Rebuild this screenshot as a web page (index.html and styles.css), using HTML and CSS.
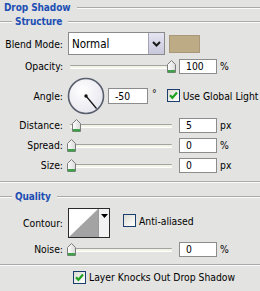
FILE: index.html
```html
<!DOCTYPE html>
<html>
<head>
<meta charset="utf-8">
<link rel="stylesheet" href="styles.css">
</head>
<body>
<div class="panel">
  <div class="title"><span class="title-text">Drop Shadow</span><i class="rule"></i></div>

  <section class="group structure">
    <div class="legend"><i class="rule lead"></i><span class="legend-text">Structure</span><i class="rule"></i></div>

    <div class="row row-blend">
      <span class="lbl">Blend Mode:</span>
      <div class="select">
        <span class="select-val">Normal</span>
        <span class="select-btn">
          <svg width="9" height="6" viewBox="0 0 9 6"><path d="M1 1 L4.5 4.5 L8 1" fill="none" stroke="#1a1a1a" stroke-width="2"/></svg>
        </span>
      </div>
      <div class="swatch"></div>
    </div>

    <div class="row row-opacity">
      <span class="lbl">Opacity:</span>
      <div class="slider"><span class="thumb" style="left:100px"></span></div>
      <div class="num">100</div><span class="unit">%</span>
    </div>

    <div class="row row-angle">
      <span class="lbl">Angle:</span>
      <svg class="dial" width="38" height="38" viewBox="0 0 38 38">
        <defs>
          <radialGradient id="dg" cx="0.4" cy="0.35" r="0.7">
            <stop offset="0" stop-color="#ffffff"/>
            <stop offset="1" stop-color="#e6e6ee"/>
          </radialGradient>
        </defs>
        <circle cx="19" cy="19" r="17.5" fill="url(#dg)" stroke="#5a5f6e" stroke-width="1.6"/>
        <line x1="19" y1="19" x2="29.5" y2="31.5" stroke="#111" stroke-width="1.2"/>
        <circle cx="19" cy="19" r="1.7" fill="#111"/>
      </svg>
      <div class="num num-angle">-50</div><span class="deg">°</span>
      <span class="check on"></span><span class="check-text">Use Global Light</span>
    </div>

    <div class="row row-dist">
      <span class="lbl">Distance:</span>
      <div class="slider"><span class="thumb" style="left:5px"></span></div>
      <div class="num">5</div><span class="unit">px</span>
    </div>

    <div class="row row-spread">
      <span class="lbl">Spread:</span>
      <div class="slider"><span class="thumb" style="left:0px"></span></div>
      <div class="num">0</div><span class="unit">%</span>
    </div>

    <div class="row row-size">
      <span class="lbl">Size:</span>
      <div class="slider"><span class="thumb" style="left:0px"></span></div>
      <div class="num">0</div><span class="unit">px</span>
    </div>
  </section>

  <section class="group quality">
    <div class="legend"><i class="rule lead"></i><span class="legend-text">Quality</span><i class="rule"></i></div>

    <div class="row row-contour">
      <span class="lbl">Contour:</span>
      <div class="contour">
        <svg class="curve" width="29" height="28" viewBox="0 0 29 28"><rect width="29" height="28" fill="#fff"/><path d="M29 0 L29 28 L0 28 Z" fill="#a3a3a3"/></svg>
        <span class="contour-btn"><svg width="7" height="4" viewBox="0 0 7 4"><path d="M0 0 H7 L3.5 4 Z" fill="#000"/></svg></span>
      </div>
      <span class="check off"></span><span class="check-text">Anti-aliased</span>
    </div>

    <div class="row row-noise">
      <span class="lbl">Noise:</span>
      <div class="slider"><span class="thumb" style="left:0px"></span></div>
      <div class="num">0</div><span class="unit">%</span>
    </div>
  </section>

  <div class="row row-knock">
    <span class="check on"></span><span class="check-text">Layer Knocks Out Drop Shadow</span>
  </div>
</div>
</body>
</html>
```

FILE: styles.css
```css
html, body {
  margin: 0;
  padding: 0;
  background: #e3e3e1;
}

.panel {
  width: 260px;
  height: 291px;
  overflow: hidden;
  font-family: "DejaVu Sans Condensed", "DejaVu Sans", sans-serif;
  font-size: 10.3px;
  color: #000;
  display: flex;
  flex-direction: column;
}

.rule {
  display: block;
  flex: 1;
  height: 0;
  border-top: 1px solid #a9a9a9;
  border-bottom: 1px solid #fbfbfb;
}

.title {
  height: 16px;
  display: flex;
  align-items: center;
  padding-left: 4px;
}

.title-text,
.legend-text {
  font-weight: bold;
  color: #1d4fb4;
  font-size: 10px;
  letter-spacing: -0.1px;
  line-height: 12px;
}

.title .rule {
  margin-left: 7px;
}

.legend {
  height: 12px;
  display: flex;
  align-items: center;
}

.legend .rule.lead {
  flex: none;
  width: 12px;
  margin-right: 3px;
}

.legend .legend-text + .rule {
  margin-left: 6px;
}

.group {
  display: flex;
  flex-direction: column;
  border-bottom: 1px solid #a9a9a9;
  box-shadow: 0 1px 0 #fbfbfb;
}

.structure {
  padding-bottom: 6px;
}

.quality {
  margin-top: 9px;
  padding-bottom: 5px;
}

.row {
  display: flex;
  align-items: center;
  height: 20px;
}

.lbl {
  flex: none;
  width: 63px;
  text-align: right;
  margin-right: 4px;
  white-space: nowrap;
}

/* blend mode */
.row-blend {
  height: 25px;
  margin-top: 3px;
}

.select {
  margin-left: 1px;
  width: 97px;
  height: 23px;
  box-sizing: border-box;
  border: 1px solid #8a8a8a;
  background: #fff;
  display: flex;
  align-items: stretch;
}

.select-val {
  flex: 1;
  display: flex;
  align-items: center;
  padding-left: 3px;
  font-size: 11.5px;
}

.select-btn {
  width: 15px;
  background: linear-gradient(#e4e4f2, #c8c8dc);
  border-left: 1px solid #a4a4b4;
  display: flex;
  align-items: center;
  justify-content: center;
}

.swatch {
  margin-left: 4px;
  width: 31px;
  height: 18px;
  box-sizing: border-box;
  background: #bdab86;
  border: 1px solid #a9997a;
}

/* sliders */
.slider {
  position: relative;
  width: 105px;
  height: 13px;
  flex: none;
}

.slider::before {
  content: "";
  position: absolute;
  left: 3px;
  right: 0;
  top: 5px;
  height: 2px;
  border-top: 1px solid #a2a2a2;
  border-bottom: 1px solid #ffffff;
  background: #f3f3e6;
  border-radius: 1px;
}

.thumb {
  position: absolute;
  top: 0;
  width: 9px;
  height: 13px;
  background:
    url("data:image/svg+xml,%3Csvg xmlns='http://www.w3.org/2000/svg' width='9' height='13' viewBox='0 0 9 13'%3E%3Cdefs%3E%3ClinearGradient id='g' x1='0' y1='0' x2='1' y2='0'%3E%3Cstop offset='0' stop-color='%23ffffff'/%3E%3Cstop offset='1' stop-color='%23d9d9d9'/%3E%3C/linearGradient%3E%3C/defs%3E%3Cpath d='M0.5 4.5 L4.5 0.5 L8.5 4.5 L8.5 12.5 L0.5 12.5 Z' fill='url(%23g)' stroke='%237c7c7c'/%3E%3Crect x='1' y='10' width='7' height='2.5' fill='%2341a04a'/%3E%3C/svg%3E") no-repeat;
}

.num {
  margin-left: 7px;
  width: 38px;
  height: 15px;
  box-sizing: border-box;
  border: 1px solid #8c8c8c;
  background: #fff;
  padding-left: 6px;
  line-height: 13px;
  flex: none;
}

.unit {
  margin-left: 3px;
}

/* angle */
.row-angle {
  height: 39px;
}

.dial {
  flex: none;
  margin-left: 0;
}

.num-angle {
  margin-left: 3px;
  width: 40px;
  height: 16px;
  line-height: 14px;
}

.deg {
  margin-left: 4px;
  margin-top: -6px;
}

.check {
  flex: none;
  width: 13px;
  height: 13px;
  box-sizing: border-box;
  border: 1px solid #1c3e6e;
  background: linear-gradient(135deg, #dcdcd4, #ffffff);
  display: inline-block;
  position: relative;
}

.check.on::after {
  content: "";
  position: absolute;
  left: 1px;
  top: 1px;
  width: 9px;
  height: 9px;
  background: url("data:image/svg+xml,%3Csvg xmlns='http://www.w3.org/2000/svg' width='9' height='9' viewBox='0 0 9 9'%3E%3Cpath d='M1 4.2 L3.4 6.8 L8 1.6' fill='none' stroke='%2321a121' stroke-width='2.2'/%3E%3C/svg%3E") no-repeat;
}

.row-angle .check {
  margin-left: 10px;
}

.check-text {
  margin-left: 3px;
  white-space: nowrap;
}

/* contour */
.row-contour {
  height: 31px;
  margin-top: 4px;
}

.contour {
  margin-left: 1px;
  flex: none;
  width: 42px;
  height: 30px;
  box-sizing: border-box;
  border: 1px solid #2a2a2a;
  display: flex;
  background: #fff;
}

.curve {
  display: block;
}

.contour-btn {
  width: 11px;
  border-left: 1px solid #9a9a9a;
  background: #f2f2f2;
  display: flex;
  justify-content: center;
  align-items: flex-start;
  padding-top: 5px;
  box-sizing: border-box;
}

.row-contour .check {
  margin-left: 13px;
  margin-top: -4px;
}

.row-contour .check-text {
  margin-top: -4px;
}

.row-noise {
  margin-top: 1px;
}

/* bottom checkbox */
.row-knock {
  height: 20px;
  margin-top: 2px;
  padding-left: 73px;
}
```
